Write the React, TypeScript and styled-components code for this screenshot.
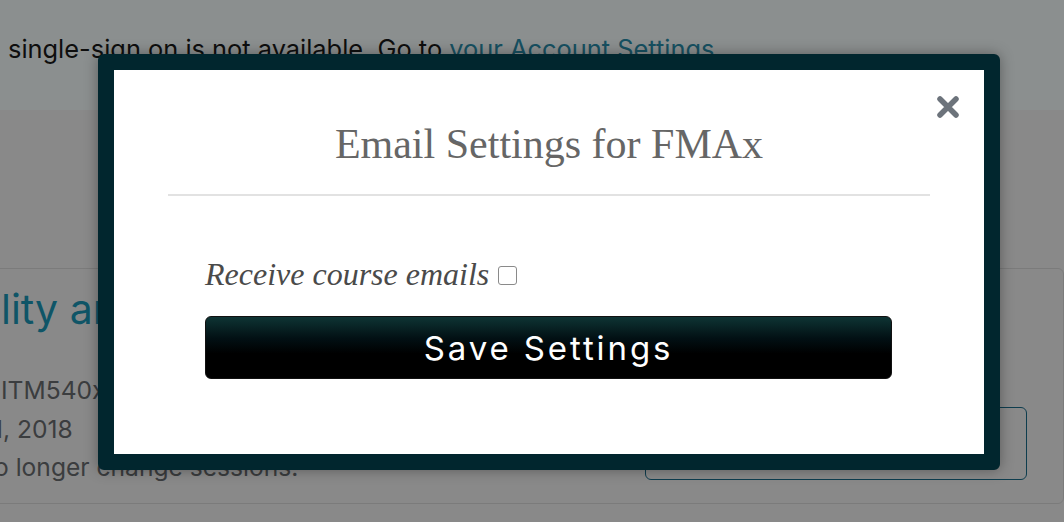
import styled, { createGlobalStyle } from 'styled-components'

const Global = createGlobalStyle`
  html, body {
    margin: 0;
    padding: 0;
    width: 1064px;
    height: 522px;
    overflow: hidden;
    background: #f5f5f5;
  }
`

const Page = styled.div`
  position: relative;
  width: 1064px;
  height: 522px;
  overflow: hidden;
  font-family: Inter, 'Liberation Sans', sans-serif;
  background: #f5f5f5;
`

const AlertBand = styled.div`
  height: 110px;
  box-sizing: border-box;
  padding: 34px 0 0 8px;
  background: #f8ffff;
  color: #1a1a1a;
  font-size: 25.4px;
  line-height: 30px;
  white-space: nowrap;
`

const Link = styled.a`
  color: #2a8fae;
  text-decoration: none;
`

const Main = styled.main`
  padding-top: 158px;
`

const Card = styled.section`
  margin-left: -12px;
  width: 1076px;
  height: 236px;
  box-sizing: border-box;
  border: 1px solid #dcdcdc;
  border-radius: 6px;
  padding: 12px 36px 0 12px;
  display: grid;
  grid-template-columns: 1fr 382px;
  grid-template-rows: auto 1fr;
`

const CourseTitle = styled.h2`
  grid-column: 1 / span 2;
  margin: 0;
  font-weight: 400;
  font-size: 41px;
  line-height: 56px;
  color: #1b98b8;
  white-space: nowrap;
`

const Details = styled.div`
  margin-top: 34px;
  font-size: 24.6px;
  line-height: 38.5px;
  color: #6a6d70;
  white-space: nowrap;
`

const Cut = styled.span<{ $shift: number }>`
  display: inline-block;
  margin-left: ${(p) => p.$shift}px;
`

const OutlineButton = styled.div`
  align-self: start;
  margin-top: 70px;
  height: 73px;
  box-sizing: border-box;
  border: 1.5px solid #1a6d8c;
  border-radius: 6px;
`

const Overlay = styled.div`
  position: absolute;
  inset: 0;
  background: rgba(0, 0, 0, 0.44);
  padding: 54px 0 0 98px;
  box-sizing: border-box;
`

const Dialog = styled.div`
  position: relative;
  width: 902px;
  height: 416px;
  box-sizing: border-box;
  border: 16px solid #01262e;
  border-radius: 6px;
  background: #fff;
  box-shadow: 0 0 14px rgba(0, 0, 0, 0.35);
  padding: 0 54px;
`

const Close = styled.button`
  position: absolute;
  top: 25px;
  right: 24px;
  width: 24px;
  height: 24px;
  padding: 0;
  border: none;
  background: none;
  cursor: pointer;
  display: flex;
`

const Title = styled.h2`
  margin: 0;
  padding: 51px 0 27px;
  text-align: center;
  font-family: 'Liberation Serif', serif;
  font-weight: 400;
  font-size: 42px;
  line-height: 46px;
  color: #666;
  border-bottom: 2px solid #e2e2e2;
`

const Form = styled.form`
  padding: 60px 38px 0 37px;
`

const Label = styled.label`
  display: flex;
  align-items: center;
  gap: 9px;
  font-family: 'Liberation Serif', serif;
  font-style: italic;
  font-size: 32px;
  line-height: 36px;
  color: #4a4a4a;
`

const Check = styled.input`
  appearance: none;
  width: 19px;
  height: 19px;
  margin: 2px 0 0;
  border: 1px solid #8a8a8a;
  border-radius: 3px;
  background: #fff;
`

const SaveButton = styled.button`
  display: block;
  width: 100%;
  height: 63px;
  margin-top: 24px;
  border: 1px solid #111;
  border-radius: 6px;
  background: linear-gradient(to bottom, #0e3434 0%, #021014 35%, #000 60%);
  color: #fff;
  font-family: Inter, 'Liberation Sans', sans-serif;
  font-size: 33px;
  letter-spacing: 2.9px;
  cursor: pointer;
`

export default function App() {
  return (
    <Page>
      <Global />
      <AlertBand>
        single-sign on is not available. Go to <Link href="#">your Account Settings</Link>
      </AlertBand>
      <Main>
        <Card>
          <CourseTitle>lity and Security</CourseTitle>
          <Details>
            <div>ITM540x</div>
            <div>
              <Cut $shift={-8}>1, 2018</Cut>
            </div>
            <div>
              <Cut $shift={-7}>o longer change sessions.</Cut>
            </div>
          </Details>
          <OutlineButton />
        </Card>
      </Main>
      <Overlay>
        <Dialog role="dialog">
          <Close aria-label="Close">
            <svg width="24" height="24" viewBox="0 0 24 24">
              <path
                d="M4 4 L20 20 M20 4 L4 20"
                stroke="#6c737b"
                strokeWidth="5.5"
                strokeLinecap="round"
              />
            </svg>
          </Close>
          <Title>Email Settings for FMAx</Title>
          <Form onSubmit={(e) => e.preventDefault()}>
            <Label>
              Receive course emails
              <Check type="checkbox" />
            </Label>
            <SaveButton type="submit">Save Settings</SaveButton>
          </Form>
        </Dialog>
      </Overlay>
    </Page>
  )
}
